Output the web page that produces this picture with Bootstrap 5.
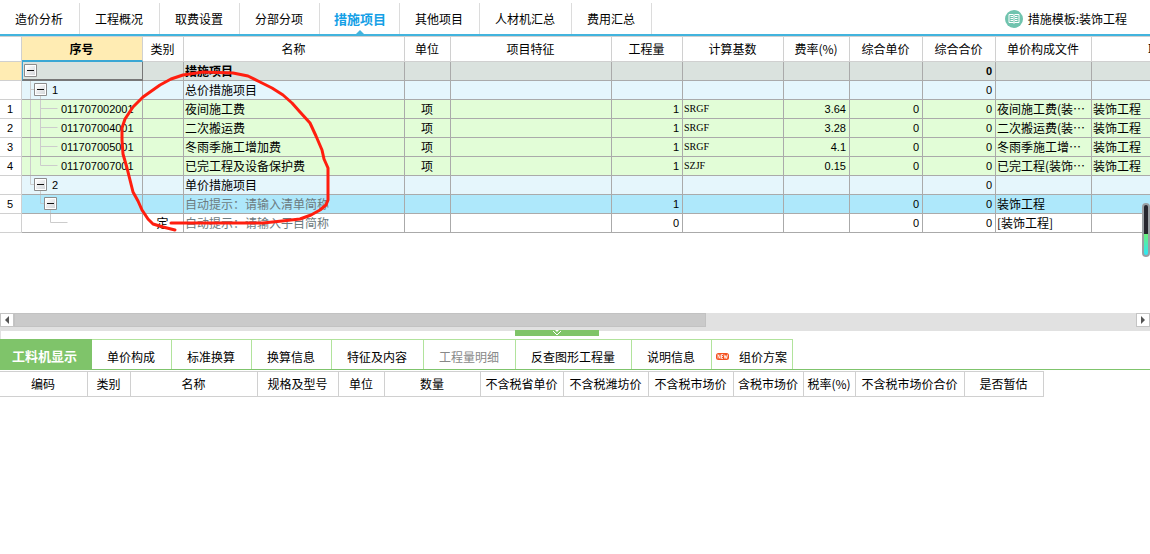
<!DOCTYPE html>
<html lang="zh-CN">
<head>
<meta charset="utf-8">
<meta name="viewport" content="width=device-width, initial-scale=1">
<title>措施项目</title>
<link href="https://cdn.jsdelivr.net/npm/bootstrap@5.3.0/dist/css/bootstrap.min.css" rel="stylesheet">
<style>
body{font:12px/18px "Noto Sans CJK SC",sans-serif;color:#000;background:#fff;overflow-x:hidden}
button{font:inherit;color:inherit;background:none;border:0;padding:0}
/* top tabs */
.top-tabs{border-bottom:2px solid #42b4de;padding-top:3px}
.top-tabs button{height:31px;padding:0 16px 0 15px;border-right:1px solid #dcdcdc;position:relative}
.top-tabs button.active{color:#14a0e6;font-weight:700;font-size:13px;padding:0 13px 0 14px}
.top-tabs button.active::after{content:"";position:absolute;left:50%;bottom:0;margin-left:-4px;border:4px solid transparent;border-top:0;border-bottom-color:#42b4de}
.tpl{padding-right:23px;gap:5px}
/* grids */
.sheet-box{overflow:hidden;padding-bottom:80px}
.sheet{table-layout:fixed;border-collapse:separate;border-spacing:0}
.main-sheet{width:1254px}
.sheet th{height:26px;padding:0 1px 0 0;font-weight:400;text-align:center;white-space:nowrap;border:solid #d0d0d0;border-width:1px 1px 1px 0;line-height:24px}
.sheet td{height:19px;line-height:18px;padding:0 2px 0 1px;border:solid #aaa;border-width:0 1px 1px 0;white-space:nowrap;overflow:hidden}
.sheet td.r{text-align:right}
.sheet td.c{text-align:center}
.sheet tbody th{height:19px;line-height:18px;border-width:0 1px 1px 0}
.sheet th.pick{background:#ffecb3;font-weight:700;border-bottom:2px solid #3aa7d4;line-height:23px}
.sheet tbody th.pick{border-bottom:1px solid #d0d0d0;line-height:18px}
.n{font-family:"Liberation Sans",sans-serif;font-size:11px}
.sheet td.r,.sheet tbody th{font-family:"Liberation Sans",sans-serif;font-size:11px;padding-right:3px}
.sheet tbody th{padding-left:2px}
.sheet td.s{font-family:"Liberation Serif",serif;font-size:10px}
.total td{background:#dae2de;font-weight:700}
.group td{background:#e5f6fc}
.item td{background:#e2fdd7}
.now td{background:#aee8fb}
.sheet td.tree{padding:0}
.sheet td.tree svg{display:block}
.sheet td.cur{border-left:1px solid #3aa7d4;border-right:1px solid #777;border-bottom:2px solid #777}
.hint{color:#6c7b80}
/* scrollbar */
.bar{background:#e1e1e1;height:18px}
.bar button{width:14px;height:14px;background:#fff;border:1px solid #c4c4c4;line-height:0}
.thumb{height:14px;width:61.7%;background:#cacaca;border:1px solid #c2c2c2}
.grip{position:absolute;left:514px;top:-1px;width:84px;height:6px;background:#7fc468;line-height:0}
.splitter{height:8px;border-left:1px solid #e1e1e1}
/* lower tabs */
.low-tabs{border-bottom:1px solid #7fc46c}
.low-tabs button{height:30px;padding:4px 16px 0 15px;border:solid #b1e39c;border-width:1px 1px 0 0}
.low-tabs button.active{width:92px;padding:3px 2px 0 0;background:#7fc46a;border-color:#7fc46a;color:#fff;font-weight:700;font-size:13px}
.low-tabs button.fresh{padding:4px 5px 0 4px;width:81px}
.low-tabs button:disabled{color:#888}
.low-sheet{width:1044px;margin-top:1px}
/* annotation and floating gauge */
.ink{position:absolute;left:0;top:0;pointer-events:none}
.gauge{position:absolute;right:0;top:203px;width:8px;height:54px;border:2px solid #9a9fa3;border-radius:4px;background:linear-gradient(#26262e 0 58%,#6cf07c 58%,#2be8f8)}
</style>
</head>
<body>
<svg width="0" height="0" class="position-absolute">
<defs><linearGradient id="g" x1="0" y1="0" x2="1" y2="1"><stop offset="0" stop-color="#fff"/><stop offset="1" stop-color="#d4d7da"/></linearGradient></defs>
<symbol id="box" viewBox="0 0 13 13"><path d="M.5.5h12v12H.5z" fill="#fff" stroke="#8c8c8c"/><path d="M2 2h9v9H2z" fill="url(#g)"/><path d="M3 6h7v1H3z" fill="#111"/></symbol>
</svg>
<main class="position-relative">
<nav class="top-tabs d-flex">
<button type="button">造价分析</button><button type="button">工程概况</button><button type="button">取费设置</button><button type="button">分部分项</button><button type="button" class="active">措施项目</button><button type="button">其他项目</button><button type="button">人材机汇总</button><button type="button">费用汇总</button>
<a href="#" class="tpl ms-auto d-flex align-items-center text-reset text-decoration-none"><svg width="18" height="18" viewBox="0 0 18 18"><circle cx="9" cy="9" r="9" fill="#70c3ae"/><path d="M4 4.500h4l1 .8 1-.8h4v8h-4l-1 .8-1-.8H4z" fill="none" stroke="#fff"/><path d="M9 5v8M5.500 6.500H8M5.500 8.500H8M5.500 10.500H8M10 6.500h2.500M10 8.500h2.500M10 10.500h2.500" stroke="#fff" fill="none"/></svg><span>措施模板:装饰工程</span></a>
</nav>
<div class="sheet-box">
<table class="sheet main-sheet">
<colgroup><col style="width:22px"><col style="width:121px"><col style="width:41px"><col style="width:221px"><col style="width:46px"><col style="width:161px"><col style="width:71px"><col style="width:101px"><col style="width:66px"><col style="width:73px"><col style="width:73px"><col style="width:96px"><col style="width:162px"></colgroup>
<thead><tr><th></th><th class="pick">序号</th><th>类别</th><th>名称</th><th>单位</th><th>项目特征</th><th>工程量</th><th>计算基数</th><th>费率(%)</th><th>综合单价</th><th>综合合价</th><th>单价构成文件</th><th>取费专业</th></tr></thead>
<tbody>
<tr class="total"><th class="pick"></th><td class="tree cur"><svg width="40" height="17"><use href="#box" x="1" y="2" width="13" height="13"/></svg></td><td></td><td>措施项目</td><td></td><td></td><td></td><td></td><td></td><td></td><td class="r">0</td><td></td><td></td></tr>
<tr class="group"><th></th><td class="tree"><div class="d-flex"><svg width="30" height="18"><path d="M8.500 0v18M8.500 8.500h4M18.500 14v4" stroke="#ccc" fill="none"/><use href="#box" x="12" y="2" width="13" height="13"/></svg><span class="n">1</span></div></td><td></td><td>总价措施项目</td><td></td><td></td><td></td><td></td><td></td><td></td><td class="r">0</td><td></td><td></td></tr>
<tr class="item"><th>1</th><td class="tree"><div class="d-flex"><svg width="39" height="18"><path d="M8.500 0v18M18.500 0v18M18.500 8.500h17" stroke="#ccc" fill="none"/></svg><span class="n">011707002001</span></div></td><td></td><td>夜间施工费</td><td class="c">项</td><td></td><td class="r">1</td><td class="s">SRGF</td><td class="r">3.64</td><td class="r">0</td><td class="r">0</td><td>夜间施工费(装…</td><td>装饰工程</td></tr>
<tr class="item"><th>2</th><td class="tree"><div class="d-flex"><svg width="39" height="18"><path d="M8.500 0v18M18.500 0v18M18.500 8.500h17" stroke="#ccc" fill="none"/></svg><span class="n">011707004001</span></div></td><td></td><td>二次搬运费</td><td class="c">项</td><td></td><td class="r">1</td><td class="s">SRGF</td><td class="r">3.28</td><td class="r">0</td><td class="r">0</td><td>二次搬运费(装…</td><td>装饰工程</td></tr>
<tr class="item"><th>3</th><td class="tree"><div class="d-flex"><svg width="39" height="18"><path d="M8.500 0v18M18.500 0v18M18.500 8.500h17" stroke="#ccc" fill="none"/></svg><span class="n">011707005001</span></div></td><td></td><td>冬雨季施工增加费</td><td class="c">项</td><td></td><td class="r">1</td><td class="s">SRGF</td><td class="r">4.1</td><td class="r">0</td><td class="r">0</td><td>冬雨季施工增…</td><td>装饰工程</td></tr>
<tr class="item"><th>4</th><td class="tree"><div class="d-flex"><svg width="39" height="18"><path d="M8.500 0v18M18.500 0v8.500h17" stroke="#ccc" fill="none"/></svg><span class="n">011707007001</span></div></td><td></td><td>已完工程及设备保护费</td><td class="c">项</td><td></td><td class="r">1</td><td class="s">SZJF</td><td class="r">0.15</td><td class="r">0</td><td class="r">0</td><td>已完工程(装饰…</td><td>装饰工程</td></tr>
<tr class="group"><th></th><td class="tree"><div class="d-flex"><svg width="30" height="18"><path d="M8.500 0v8.500h4M18.500 14v4" stroke="#ccc" fill="none"/><use href="#box" x="12" y="2" width="13" height="13"/></svg><span class="n">2</span></div></td><td></td><td>单价措施项目</td><td></td><td></td><td></td><td></td><td></td><td></td><td class="r">0</td><td></td><td></td></tr>
<tr class="now"><th>5</th><td class="tree"><svg width="40" height="18"><path d="M18.500 0v8.500h4M28.500 14v4" stroke="#b8cdd4" fill="none"/><use href="#box" x="22" y="2" width="13" height="13"/></svg></td><td></td><td class="hint">自动提示：请输入清单简称</td><td></td><td></td><td class="r">1</td><td></td><td></td><td class="r">0</td><td class="r">0</td><td>装饰工程</td><td></td></tr>
<tr><th></th><td class="tree"><svg width="50" height="18"><path d="M28.500 0v8.500h17" stroke="#ccc" fill="none"/></svg></td><td class="c">定</td><td class="hint">自动提示：请输入子目简称</td><td></td><td></td><td class="r">0</td><td></td><td></td><td class="r">0</td><td class="r">0</td><td>[装饰工程]</td><td></td></tr>
</tbody>
</table>
</div>
<div class="bar d-flex">
<button type="button" aria-label="向左"><svg width="12" height="12"><path d="M8 2v8L4 6z" fill="#555"/></svg></button>
<div class="flex-fill"><div class="thumb"></div></div>
<button type="button" aria-label="向右"><svg width="12" height="12"><path d="M4 2v8l4-4z" fill="#555"/></svg></button>
</div>
<div class="splitter position-relative"><button type="button" class="grip" aria-label="折叠"><svg width="10" height="6"><path d="M3 0h4L5 2z" fill="#fff"/><path d="M1 1l4 4 4-4" fill="none" stroke="#fff"/></svg></button></div>
<nav class="low-tabs d-flex">
<button type="button" class="active">工料机显示</button><button type="button">单价构成</button><button type="button">标准换算</button><button type="button">换算信息</button><button type="button">特征及内容</button><button type="button" disabled>工程量明细</button><button type="button">反查图形工程量</button><button type="button">说明信息</button><button type="button" class="fresh d-flex align-items-center justify-content-between"><svg width="13" height="7" viewBox="0 0 13 7"><rect width="13" height="7" rx="2.500" fill="#f4511e"/><path d="M2 5.500v-4l2 4v-4M7 1.500H5.500v4H7M5.500 3.500H7M8 1.500l1 4 .8-3 .8 3 1-4" fill="none" stroke="#fff" stroke-width=".8"/></svg><span>组价方案</span></button>
</nav>
<table class="sheet low-sheet">
<colgroup><col style="width:88px"><col style="width:43px"><col style="width:127px"><col style="width:81px"><col style="width:46px"><col style="width:96px"><col style="width:83px"><col style="width:85px"><col style="width:85px"><col style="width:70px"><col style="width:52px"><col style="width:109px"><col style="width:79px"></colgroup>
<thead><tr><th>编码</th><th>类别</th><th>名称</th><th>规格及型号</th><th>单位</th><th>数量</th><th>不含税省单价</th><th>不含税潍坊价</th><th>不含税市场价</th><th>含税市场价</th><th>税率(%)</th><th>不含税市场价合价</th><th>是否暂估</th></tr></thead>
</table>
<svg class="ink" width="340" height="240" fill="none" stroke="#ff1e0f" stroke-width="3" stroke-linecap="round" stroke-linejoin="round"><path d="M175 230L163 227 153 224 148 219 142 210 138 201 133 192 130 180 127 168 123 154 122 140 122 128 125 119 133 107 143 97 160 85 171 79 183 75 203 72 233 73 248 76 260 82 272 88 283 95 292 103 300 112 310 123 316 136 322 150 324 159 328 168V200L326 205 320 210 311 215 300 219 282 221 263 223H171"/></svg>
<div class="gauge"></div>
</main>
<script src="https://cdn.jsdelivr.net/npm/bootstrap@5.3.0/dist/js/bootstrap.bundle.min.js"></script>
</body>
</html>
